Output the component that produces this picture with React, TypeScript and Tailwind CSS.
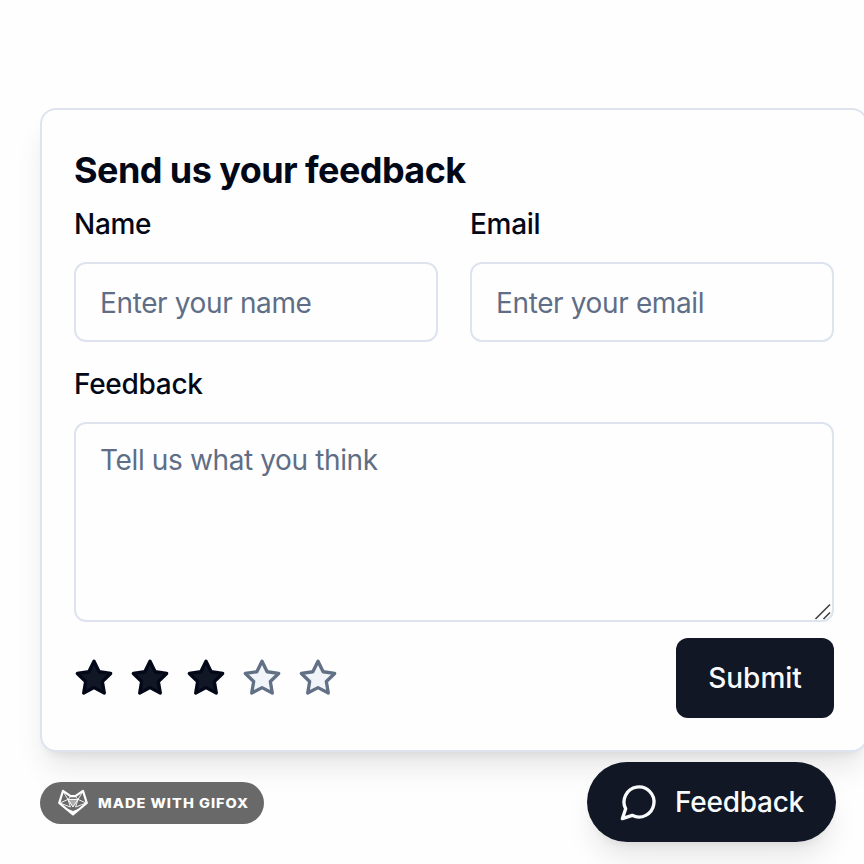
import { useState } from "react";

const STAR_POINTS =
  "12 2 15.09 8.26 22 9.27 17 14.14 18.18 21.02 12 17.77 5.82 21.02 7 14.14 2 9.27 8.91 8.26 12 2";

const fieldClass =
  "block w-full rounded-[12px] border-2 border-[#dde4ef] bg-[#fefefe] px-6 text-[28px] tracking-[-0.37px] text-[#64748b] outline-none placeholder:text-[#5f6e86] placeholder:opacity-100";

function Star({ filled, onClick }: { filled: boolean; onClick: () => void }) {
  return (
    <button type="button" onClick={onClick} className="size-10">
      <svg
        viewBox="0 0 24 24"
        strokeWidth="2"
        strokeLinecap="round"
        strokeLinejoin="round"
        className={
          filled
            ? "size-10 fill-[#111724] stroke-[#020817]"
            : "size-10 fill-[#f1f4f9] stroke-[#627086]"
        }
      >
        <polygon points={STAR_POINTS} />
      </svg>
    </button>
  );
}

function FoxLogo() {
  return (
    <svg
      viewBox="0 0 32 28"
      className="h-7 w-8 shrink-0"
      fill="none"
      stroke="#fff"
      strokeLinejoin="round"
    >
      <path d="M6 1.8 L13.6 7.2 H18.4 L26 1.8 L29.8 14 L16 25.4 L2.2 14 Z" strokeWidth="2.2" />
      <path d="M11 10.4 H21 L16 18 Z" fill="#fff" fillOpacity="0.45" strokeWidth="1" />
      <path
        d="M6.4 3 L11 10.4 L3 14 L13.4 18 L11 10.4 L14 7 M25.6 3 L21 10.4 L29 14 L18.6 18 L21 10.4 L18 7"
        strokeWidth="1"
        strokeOpacity="0.9"
      />
      <path d="M11 20.5 L16 22.5 L21 20.5 L16 26 Z" fill="#fff" strokeWidth="1" />
    </svg>
  );
}

export default function App() {
  const [rating, setRating] = useState(3);

  return (
    <div className="h-[864px] w-[864px] overflow-hidden bg-[#fefefe] pt-[108px] pl-10 font-['Inter',sans-serif] text-[#020817]">
      <form
        onSubmit={(e) => e.preventDefault()}
        className="h-[644px] w-[828px] rounded-[16px] border-2 border-[#dde4ef] bg-[#fefefe] p-8 shadow-[0_20px_30px_-6px_rgba(0,0,0,0.1),0_8px_12px_-8px_rgba(0,0,0,0.1)]"
      >
        <h3 className="h-14 text-[36px] leading-[56px] font-bold tracking-[-0.57px]">
          Send us your feedback
        </h3>
        <div className="mt-3 grid grid-cols-2 gap-8">
          <label className="block text-[28px] leading-7 font-medium tracking-[-0.3px]">
            Name
            <input
              placeholder="Enter your name"
              className={`${fieldClass} mt-6 h-20 pt-[2px] font-normal`}
            />
          </label>
          <label className="block text-[28px] leading-7 font-medium tracking-[-0.3px]">
            Email
            <input
              placeholder="Enter your email"
              className={`${fieldClass} mt-6 h-20 pt-[2px] font-normal`}
            />
          </label>
        </div>
        <label className="relative mt-7 block text-[28px] leading-7 font-medium tracking-[-0.3px]">
          Feedback
          <textarea
            placeholder="Tell us what you think"
            className={`${fieldClass} mt-6 h-[200px] resize-none py-4 leading-10 font-normal`}
          />
          <svg
            viewBox="0 0 18 18"
            className="absolute right-[2px] bottom-[1px] size-[18px]"
            stroke="#444"
            strokeWidth="1.6"
          >
            <path d="M1.5 16 L16 1.5 M9.5 16 L16 9.5" />
          </svg>
        </label>
        <div className="mt-4 flex items-center justify-between">
          <div className="flex gap-4">
            {[1, 2, 3, 4, 5].map((n) => (
              <Star key={n} filled={n <= rating} onClick={() => setRating(n)} />
            ))}
          </div>
          <button
            type="submit"
            className="h-20 w-[158px] rounded-[12px] bg-[#111724] text-[28px] font-medium text-[#f8fafc]"
          >
            Submit
          </button>
        </div>
      </form>
      <div className="mt-[10px] flex items-start justify-between pr-7">
        <div className="mt-5 flex h-[42px] w-[224px] items-center rounded-full bg-[#696969] pl-[17px] text-white">
          <FoxLogo />
          <span className="ml-[9px] origin-left scale-x-[1.117] pt-px text-[13px] font-extrabold tracking-[0.07em] whitespace-nowrap">
            MADE WITH GIFOX
          </span>
        </div>
        <button
          type="button"
          className="flex h-20 w-[249px] items-center gap-4 rounded-full bg-[#111724] pl-8 text-[28px] font-medium tracking-[-0.25px] text-[#f8fafc] shadow-[0_20px_30px_-6px_rgba(0,0,0,0.1),0_8px_12px_-8px_rgba(0,0,0,0.1)]"
        >
          <svg
            viewBox="0 0 24 24"
            className="size-10"
            fill="none"
            stroke="currentColor"
            strokeWidth="2"
            strokeLinecap="round"
            strokeLinejoin="round"
          >
            <path d="M7.9 20A9 9 0 1 0 4 16.1L2 22Z" />
          </svg>
          Feedback
        </button>
      </div>
    </div>
  );
}
